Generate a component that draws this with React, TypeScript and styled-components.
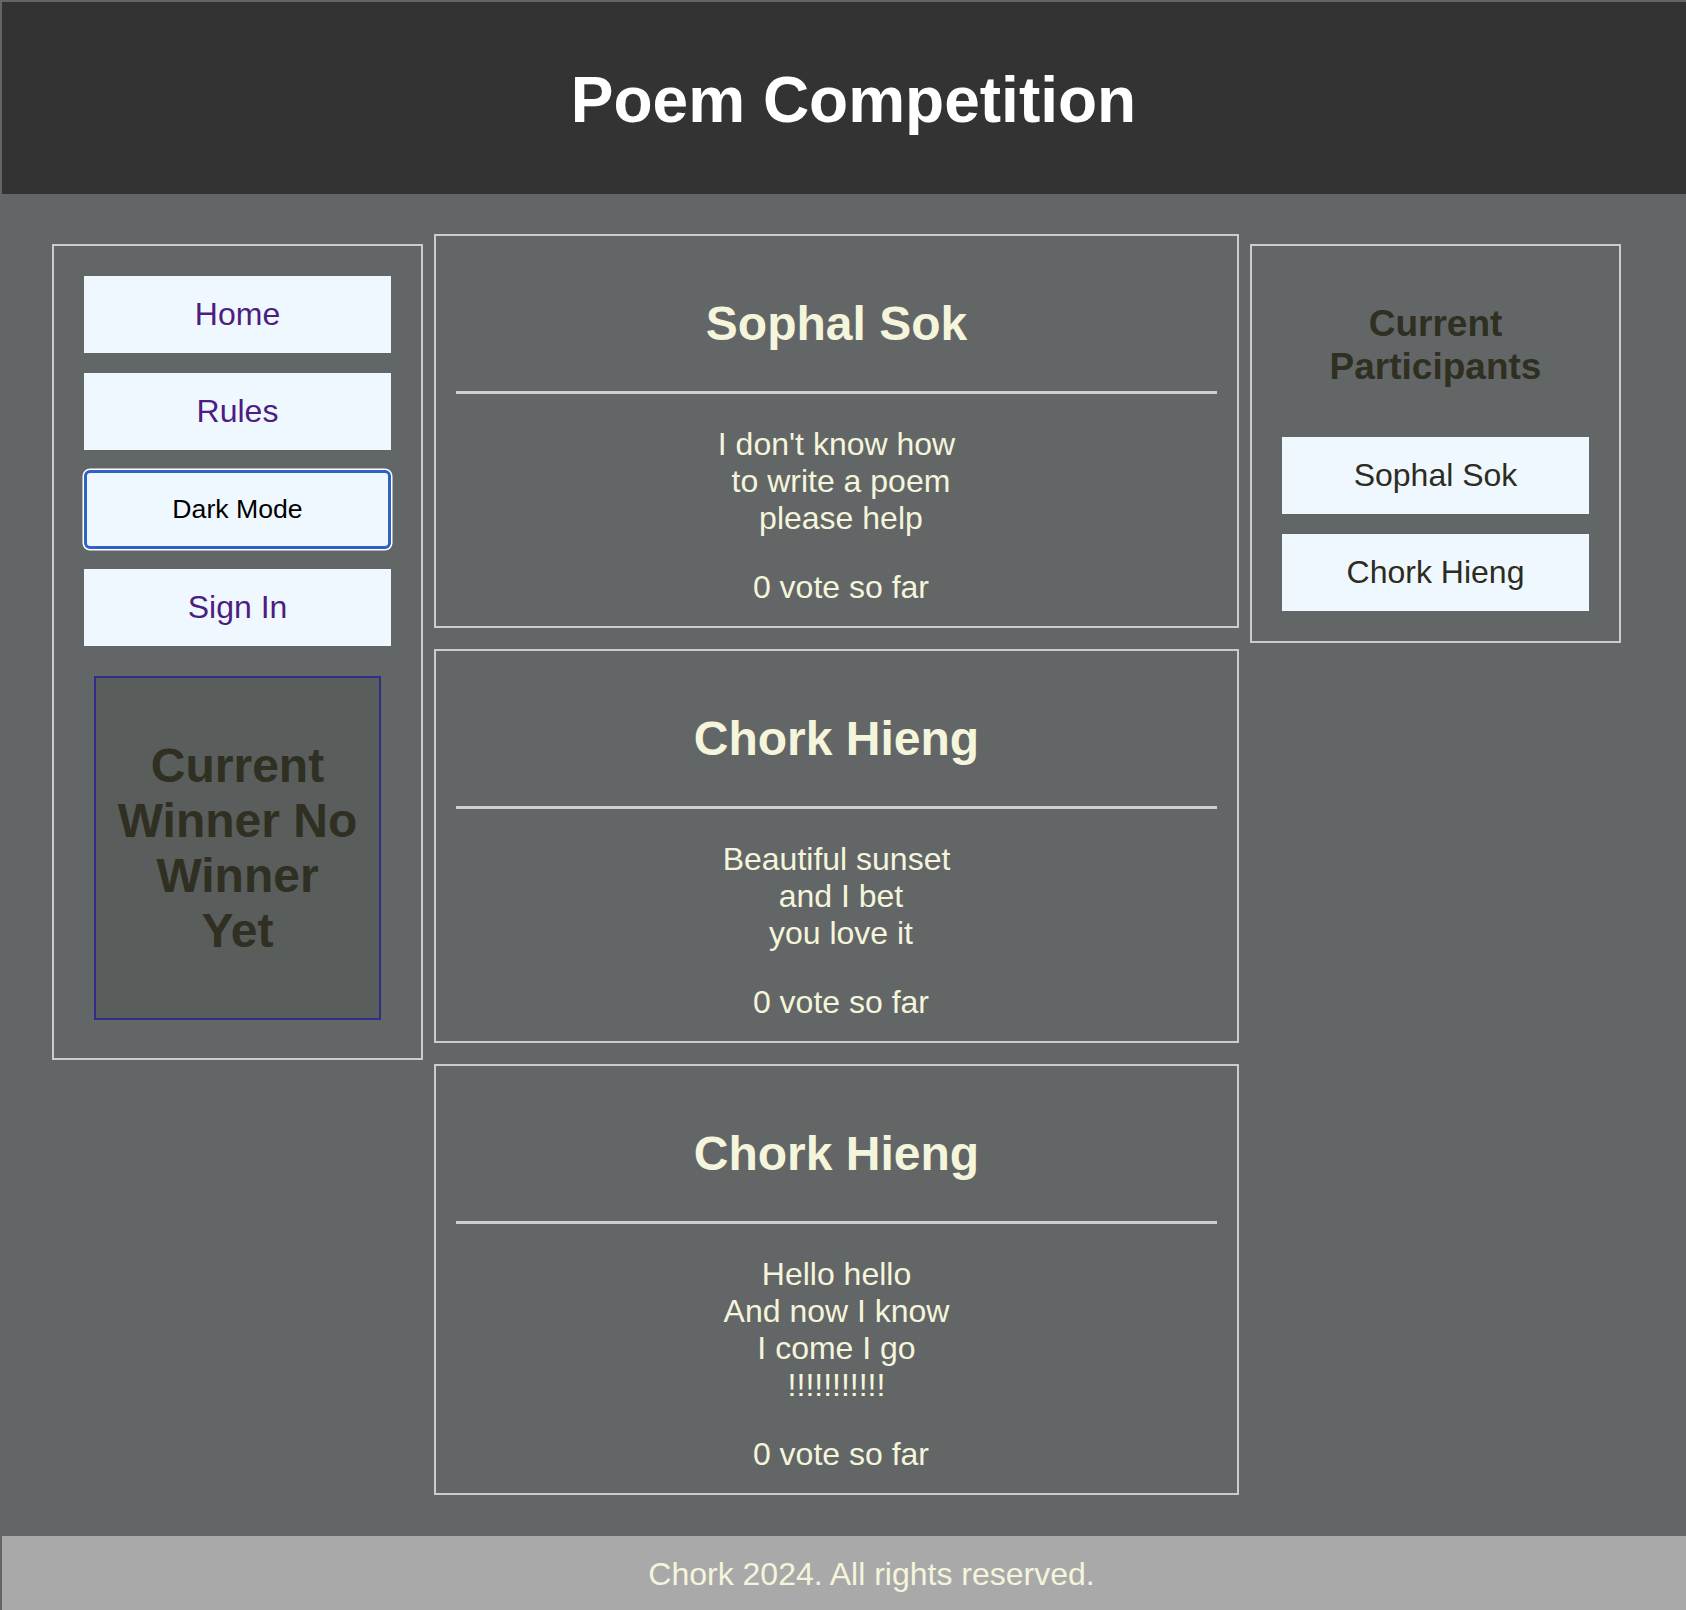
import React from 'react';
import styled, { createGlobalStyle } from 'styled-components';

const poems = [
  { author: 'Sophal Sok', text: "I don't know how\n to write a poem\n please help", votes: 0 },
  { author: 'Chork Hieng', text: 'Beautiful sunset\n and I bet\n you love it', votes: 0 },
  { author: 'Chork Hieng', text: 'Hello hello\nAnd now I know\nI come I go\n!!!!!!!!!!!', votes: 0 },
];

const participants = ['Sophal Sok', 'Chork Hieng'];

export default function App() {
  return (
    <>
      <GlobalStyle />
      <Page>
        <Header>
          <Title>Poem Competition</Title>
        </Header>
        <Main>
          <SidePanel>
            <NavButton $color="#4d1d80">Home</NavButton>
            <NavButton $color="#4d1d80">Rules</NavButton>
            <NavButton $color="#000" $small $focused>
              Dark Mode
            </NavButton>
            <NavButton $color="#4d1d80">Sign In</NavButton>
            <WinnerBox>
              <WinnerTitle>Current Winner No Winner Yet</WinnerTitle>
            </WinnerBox>
          </SidePanel>

          <PoemList>
            {poems.map((poem, i) => (
              <PoemCard key={i}>
                <Author>{poem.author}</Author>
                <Divider />
                <PoemText>{poem.text}</PoemText>
                <Votes>{` ${poem.votes} vote so far`}</Votes>
              </PoemCard>
            ))}
          </PoemList>

          <SidePanel>
            <PanelTitle>Current Participants</PanelTitle>
            {participants.map((name) => (
              <NavButton key={name} $color="#2c2c20">
                {name}
              </NavButton>
            ))}
          </SidePanel>
        </Main>
        <Footer>Chork 2024. All rights reserved.</Footer>
      </Page>
    </>
  );
}

const GlobalStyle = createGlobalStyle`
  body {
    margin: 0;
    background: #636667;
    font-family: "Liberation Sans", Arial, Helvetica, sans-serif;
  }
`;

const Page = styled.div`
  padding: 2px 0 0 2px;
`;

const Header = styled.header`
  background: #333333;
  padding: 61px 0 57px 19px;
`;

const Title = styled.h1`
  margin: 0;
  font-size: 64px;
  line-height: 74px;
  font-weight: bold;
  color: #ffffff;
  text-align: center;
`;

const Main = styled.main`
  display: grid;
  grid-template-columns: 371px 805px 371px;
  column-gap: 11px;
  align-items: start;
  padding: 40px 0 41px 50px;
`;

const SidePanel = styled.aside`
  margin-top: 10px;
  border: 2px solid #cccccc;
  padding: 30px;
  display: flex;
  flex-direction: column;
  gap: 20px;
`;

const NavButton = styled.button<{ $color: string; $small?: boolean; $focused?: boolean }>`
  height: ${(p) => (p.$focused ? '79px' : '77px')};
  display: flex;
  align-items: center;
  justify-content: center;
  background: #f0f8ff;
  border: ${(p) => (p.$focused ? '3px solid #2f62c6' : 'none')};
  border-radius: ${(p) => (p.$focused ? '6px' : '0')};
  box-shadow: ${(p) => (p.$focused ? '0 0 0 1.5px #ffffff' : 'none')};
  color: ${(p) => p.$color};
  font-family: inherit;
  font-size: ${(p) => (p.$small ? '26.67px' : '32px')};
  cursor: pointer;
`;

const WinnerBox = styled.div`
  margin: 10px 10px 8px;
  border: 2px solid #302c8a;
  background: #595d5c;
  padding: 20px;
`;

const WinnerTitle = styled.h2`
  margin: 40px 0;
  font-size: 48px;
  line-height: 55px;
  font-weight: bold;
  color: #2f2f22;
  text-align: center;
`;

const PoemList = styled.section`
  display: flex;
  flex-direction: column;
  gap: 21px;
`;

const PoemCard = styled.article`
  border: 2px solid #cccccc;
  padding: 20px;
  text-align: center;
  color: #f5f5dc;
`;

const Author = styled.h2`
  margin: 40px 0;
  font-size: 48px;
  line-height: 55px;
  font-weight: bold;
`;

const Divider = styled.hr`
  margin: 0;
  border: none;
  height: 3px;
  background: #cfcfcf;
`;

const PoemText = styled.p`
  margin: 32px 0;
  font-size: 32px;
  line-height: 37px;
  white-space: pre-wrap;
`;

const Votes = styled.p`
  margin: 0;
  font-size: 32px;
  line-height: 37px;
  white-space: pre-wrap;
`;

const PanelTitle = styled.h3`
  margin: 27px 0 29px;
  font-size: 37px;
  line-height: 42.5px;
  font-weight: bold;
  color: #2f2f22;
  text-align: center;
`;

const Footer = styled.footer`
  background: #a9a9a9;
  color: #f5f5dc;
  font-size: 32px;
  line-height: 37px;
  text-align: center;
  padding: 20px 0 20px 55px;
`;
